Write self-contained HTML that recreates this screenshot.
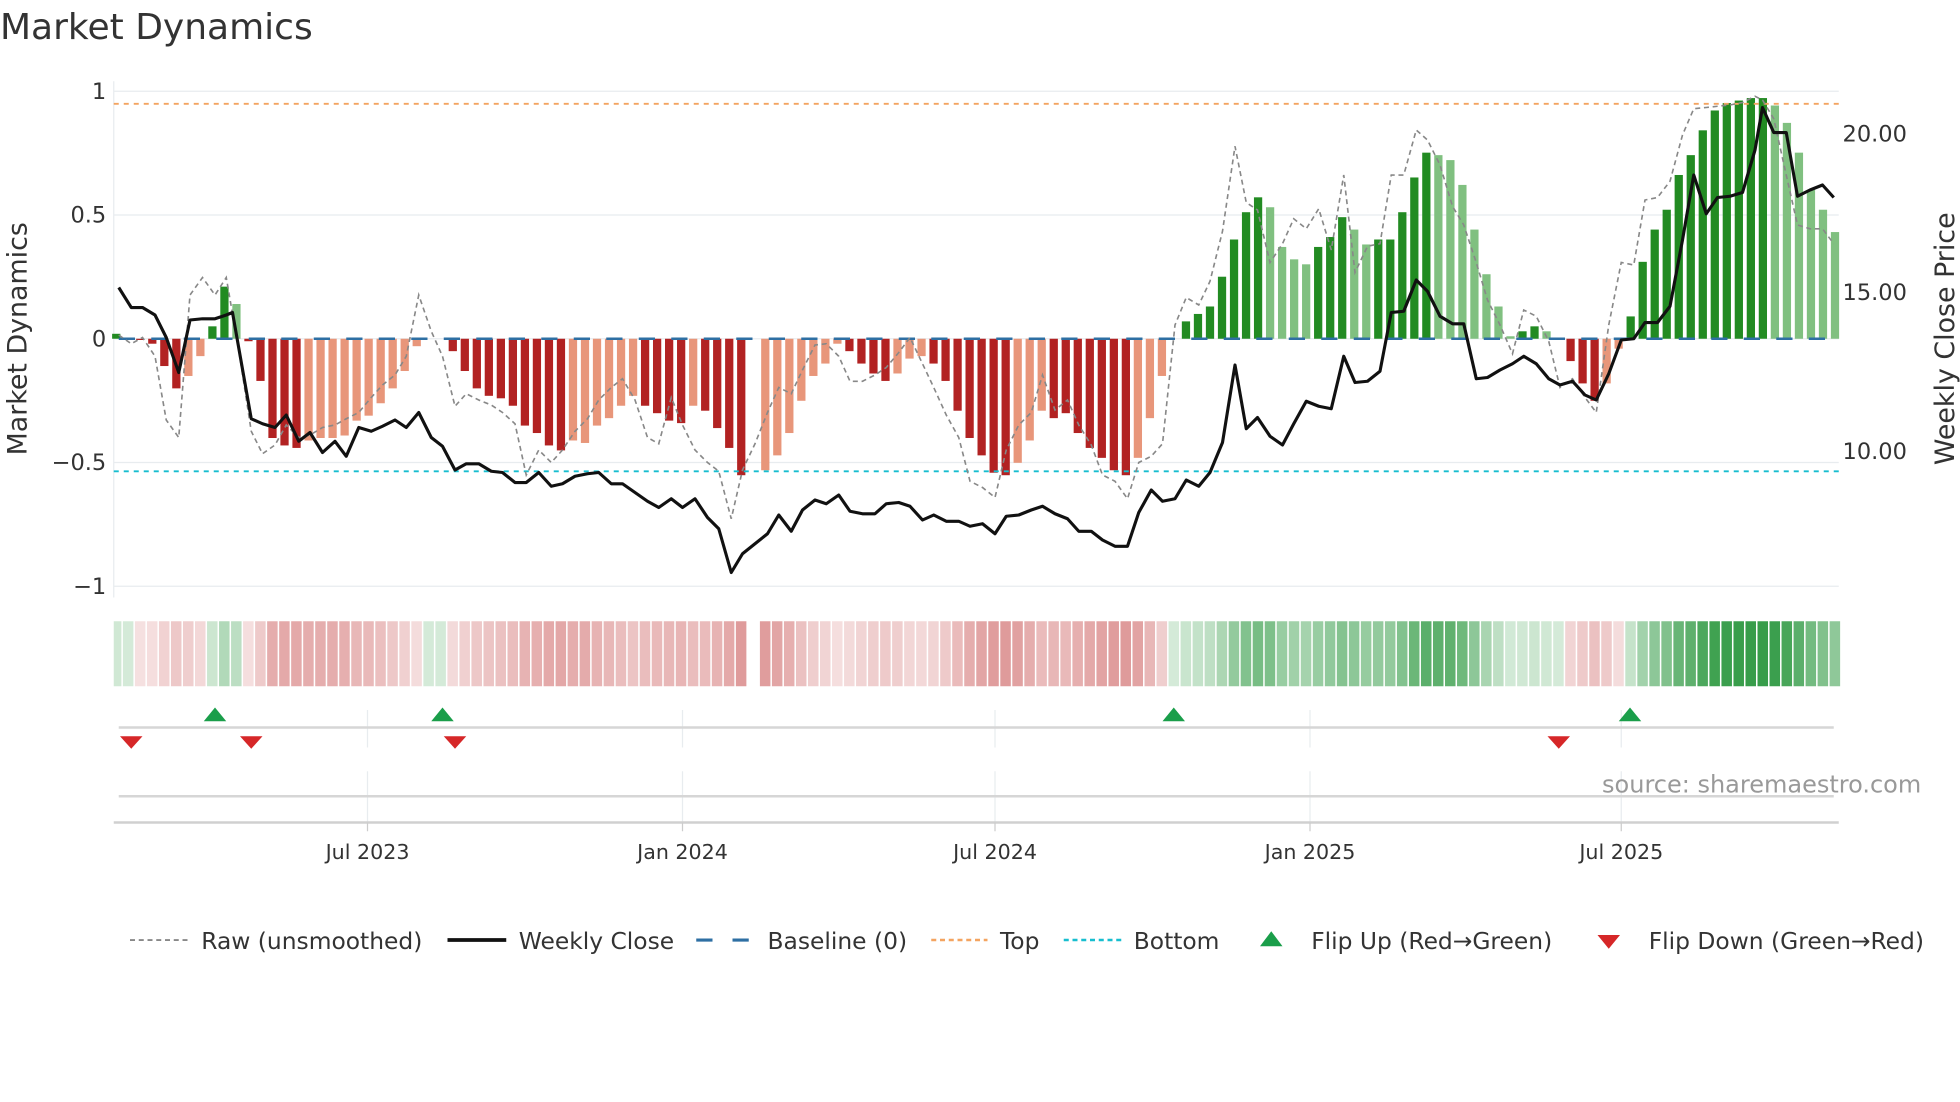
<!DOCTYPE html>
<html><head><meta charset="utf-8"><style>
html,body{margin:0;padding:0;background:#fff;width:1960px;height:1102px;overflow:hidden}
svg{display:block}
text{font-family:"DejaVu Sans","Liberation Sans",sans-serif;fill:#333}
</style></head><body>
<svg id="s" width="1960" height="1102" viewBox="0 0 1568 881.6" preserveAspectRatio="none" xmlns="http://www.w3.org/2000/svg">
<text x="0" y="31" font-size="28.8">Market Dynamics</text>
<g stroke="#e8ecef" stroke-width="1">
<line x1="91" y1="73" x2="1471" y2="73"/><line x1="91" y1="172" x2="1471" y2="172"/>
<line x1="91" y1="271" x2="1471" y2="271"/><line x1="91" y1="370" x2="1471" y2="370"/>
<line x1="91" y1="469" x2="1471" y2="469"/>
<line x1="91" y1="65" x2="91" y2="478"/>
<line x1="294" y1="568" x2="294" y2="598"/><line x1="546" y1="568" x2="546" y2="598"/><line x1="796" y1="568" x2="796" y2="598"/><line x1="1048" y1="568" x2="1048" y2="598"/><line x1="1297" y1="568" x2="1297" y2="598"/>
<line x1="294" y1="617" x2="294" y2="658"/><line x1="546" y1="617" x2="546" y2="658"/><line x1="796" y1="617" x2="796" y2="658"/><line x1="1048" y1="617" x2="1048" y2="658"/><line x1="1297" y1="617" x2="1297" y2="658"/>
</g>
<g id="bars"></g>
<g id="strip"></g>
<line x1="91" y1="83" x2="1471" y2="83" stroke="#f4a460" stroke-width="1.5" stroke-dasharray="4,4"/>
<line x1="91" y1="377" x2="1471" y2="377" stroke="#17becf" stroke-width="1.5" stroke-dasharray="4,4"/>
<line x1="95" y1="271" x2="1467" y2="271" stroke="#2e6fa3" stroke-width="2" stroke-dasharray="13,13"/>
<polyline id="raw" fill="none" stroke="#888" stroke-width="1.3" stroke-dasharray="4,3"/>
<polyline id="close" fill="none" stroke="#111" stroke-width="2.5" stroke-linejoin="round"/>
<g font-size="18" text-anchor="end">
<text x="85" y="79">1</text><text x="85" y="178">0.5</text><text x="85" y="277">0</text><text x="85" y="376">−0.5</text><text x="85" y="475">−1</text>
</g>
<g font-size="18">
<text x="1474" y="113">20.00</text><text x="1474" y="240">15.00</text><text x="1474" y="367">10.00</text>
</g>
<text transform="translate(21,271) rotate(-90)" font-size="21.5" text-anchor="middle">Market Dynamics</text>
<text transform="translate(1563,271) rotate(-90)" font-size="21.5" text-anchor="middle">Weekly Close Price</text>
<line x1="95" y1="582" x2="1467" y2="582" stroke="#d6d6d6" stroke-width="2"/>
<line x1="95" y1="637" x2="1467" y2="637" stroke="#d6d6d6" stroke-width="2"/>
<line x1="91" y1="658" x2="1471" y2="658" stroke="#d0d0d0" stroke-width="2"/>
<g stroke="#ccc" stroke-width="1"><line x1="294" y1="658" x2="294" y2="665"/><line x1="546" y1="658" x2="546" y2="665"/><line x1="796" y1="658" x2="796" y2="665"/><line x1="1048" y1="658" x2="1048" y2="665"/><line x1="1297" y1="658" x2="1297" y2="665"/></g>
<g fill="#1a9e4a">
<polygon points="163,577 181,577 172,566"/><polygon points="345,577 363,577 354,566"/><polygon points="930,577 948,577 939,566"/><polygon points="1295,577 1313,577 1304,566"/>
<polygon points="1008,757 1026,757 1017,745"/>
</g>
<g fill="#d62728">
<polygon points="96,589 114,589 105,599"/><polygon points="192,589 210,589 201,599"/><polygon points="355,589 373,589 364,599"/><polygon points="1238,589 1256,589 1247,599"/>
<polygon points="1278,748 1296,748 1287,759"/>
</g>
<text x="1537" y="634" font-size="19.2" text-anchor="end" style="fill:#999">source: sharemaestro.com</text>
<g font-size="16.5" text-anchor="middle">
<text x="294" y="687">Jul 2023</text><text x="546" y="687">Jan 2024</text><text x="796" y="687">Jul 2024</text><text x="1048" y="687">Jan 2025</text><text x="1297" y="687">Jul 2025</text>
</g>
<g font-size="18.7">
<line x1="104" y1="752" x2="150" y2="752" stroke="#888" stroke-width="1.5" stroke-dasharray="4,3"/><text x="161" y="759">Raw (unsmoothed)</text>
<line x1="358" y1="752" x2="405" y2="752" stroke="#111" stroke-width="3"/><text x="415" y="759">Weekly Close</text>
<line x1="557" y1="752" x2="603" y2="752" stroke="#2e6fa3" stroke-width="2.5" stroke-dasharray="13,16"/><text x="614" y="759">Baseline (0)</text>
<line x1="745" y1="752" x2="790" y2="752" stroke="#f4a460" stroke-width="2" stroke-dasharray="4,3"/><text x="800" y="759">Top</text>
<line x1="851" y1="752" x2="897" y2="752" stroke="#17becf" stroke-width="2" stroke-dasharray="4,3"/><text x="907" y="759">Bottom</text>
<text x="1049" y="759">Flip Up (Red→Green)</text>
<text x="1319" y="759">Flip Down (Green→Red)</text>
</g>
</svg>
<script>
var V=[[.02,'D'],[0,'D'],[-.005,'D'],[-.02,'D'],[-.11,'D'],[-.2,'D'],[-.15,'L'],[-.07,'L'],[.05,'D'],[.21,'D'],[.14,'L'],[-.01,'D'],[-.17,'D'],[-.4,'D'],[-.43,'D'],[-.44,'D'],[-.41,'L'],[-.4,'L'],[-.4,'L'],[-.39,'L'],[-.33,'L'],[-.31,'L'],[-.26,'L'],[-.2,'L'],[-.13,'L'],[-.03,'L'],[0,'N'],[0,'N'],[-.05,'D'],[-.13,'D'],[-.2,'D'],[-.23,'D'],[-.24,'D'],[-.27,'D'],[-.35,'D'],[-.38,'D'],[-.43,'D'],[-.45,'D'],[-.41,'L'],[-.42,'L'],[-.35,'L'],[-.32,'L'],[-.27,'L'],[-.23,'L'],[-.27,'D'],[-.3,'D'],[-.33,'D'],[-.34,'D'],[-.27,'L'],[-.29,'D'],[-.36,'D'],[-.44,'D'],[-.55,'D'],[null,'G'],[-.53,'L'],[-.47,'L'],[-.38,'L'],[-.25,'L'],[-.15,'L'],[-.1,'L'],[-.02,'L'],[-.05,'D'],[-.1,'D'],[-.14,'D'],[-.17,'D'],[-.14,'L'],[-.08,'L'],[-.07,'L'],[-.1,'D'],[-.17,'D'],[-.29,'D'],[-.4,'D'],[-.47,'D'],[-.54,'D'],[-.55,'D'],[-.5,'L'],[-.41,'L'],[-.29,'L'],[-.32,'D'],[-.3,'D'],[-.38,'D'],[-.44,'D'],[-.48,'D'],[-.53,'D'],[-.55,'D'],[-.48,'L'],[-.32,'L'],[-.15,'L'],[0,'N'],
[.07,'D'],[.1,'D'],[.13,'D'],[.25,'D'],[.4,'D'],[.51,'D'],[.57,'D'],[.53,'L'],[.37,'L'],[.32,'L'],[.3,'L'],[.37,'D'],[.41,'D'],[.49,'D'],[.44,'L'],[.38,'L'],[.4,'D'],[.4,'D'],[.51,'D'],[.65,'D'],[.75,'D'],[.74,'L'],[.72,'L'],[.62,'L'],[.44,'L'],[.26,'L'],[.13,'L'],[.01,'L'],[.03,'D'],[.05,'D'],[.03,'L'],[0,'N'],[-.09,'D'],[-.18,'D'],[-.25,'D'],[-.18,'L'],[-.04,'L'],[.09,'D'],[.31,'D'],[.44,'D'],[.52,'D'],[.66,'D'],[.74,'D'],[.84,'D'],[.92,'D'],[.95,'D'],[.96,'D'],[.97,'D'],[.97,'D'],[.94,'L'],[.87,'L'],[.75,'L'],[.6,'L'],[.52,'L'],[.43,'L']];
var NS='http://www.w3.org/2000/svg',bars=document.getElementById('bars'),strip=document.getElementById('strip');
var n=V.length,step=(1468-93)/(n-1);
function R(g,x,y,w,h,f){var r=document.createElementNS(NS,'rect');r.setAttribute('x',x);r.setAttribute('y',y);r.setAttribute('width',w);r.setAttribute('height',h);r.setAttribute('fill',f);g.appendChild(r);}
V.forEach(function(e,i){var v=e[0],t=e[1],x=93+i*step;if(v===null)return;
 var h=Math.abs(v)*198.5;
 if(h>0.3){var c=v>0?(t=='D'?'#228b22':'#80c080'):(t=='D'?'#b22222':'#e8967a');R(bars,x-3.3,v>0?271-h:271,6.6,h,c);}
 var a=Math.abs(v);var col=v>=0?'rgba(40,150,60,'+(0.2+0.75*a).toFixed(2)+')':'rgba(190,50,50,'+(0.15+0.62*a).toFixed(2)+')';
 var sx=Math.max(91,x-4.3);R(strip,sx,497,x+4.1-sx,52,col);});
var C=[[95,230],[105,246],[114,246],[124,252],[133,270],[143,298],[152,256],[162,255],[172,255],[181,252],[186,250],[201,335],[210,339],[220,342],[229,332],[239,353],[248,346],[258,362],[268,353],[277,365],[287,342],[297,345],[306,341],[316,336],[325,342],[335,330],[345,350],[354,357],[364,376],[373,371],[383,371],[393,377],[402,378],[412,386],[421,386],[431,378],[441,389],[450,387],[460,381],[470,379],[479,378],[489,387],[498,387],[508,394],[518,401],[527,406],[537,399],[546,406],[556,399],[566,414],[575,423],[585,458],[594,443],[604,435],[614,427],[623,412],[633,425],[642,408],[652,400],[661,403],[671,396],[680,409],[690,411],[700,411],[709,403],[719,402],[728,405],[738,416],[747,412],[757,417],[767,417],[776,421],[786,419],[796,427],[805,413],[815,412],[825,408],[834,405],[844,411],[854,415],[863,425],[873,425],[882,432],[892,437],[902,437],[911,410],[921,392],[930,401],[940,399],[949,384],[959,389],[968,378],[978,354],[988,292],[997,343],[1006,334],[1016,349],[1026,356],[1035,339],[1045,321],[1055,325],[1065,327],[1075,285],[1084,306],[1094,305],[1104,297],[1113,250],[1123,249],[1133,224],[1142,233],[1152,253],[1162,259],[1171,259],[1181,303],[1190,302],[1200,296],[1210,291],[1219,285],[1229,291],[1239,303],[1248,308],[1258,305],[1268,316],[1277,320],[1287,299],[1297,272],[1307,271],[1316,258],[1326,258],[1336,245],[1346,192],[1355,140],[1365,171],[1374,158],[1384,157],[1394,154],[1404,120],[1410,86],[1419,106],[1429,106],[1438,157],[1448,152],[1458,148],[1467,158]];
var W=[[95,268],[105,275],[114,270],[124,285],[133,336],[143,350],[152,236],[162,222],[172,236],[181,222],[191,280],[201,345],[210,363],[220,356],[229,340],[239,350],[248,348],[258,342],[268,340],[277,335],[287,330],[297,318],[306,308],[316,300],[325,285],[335,236],[345,265],[354,285],[364,325],[373,315],[383,320],[393,324],[402,330],[412,339],[421,380],[431,360],[441,370],[450,360],[460,345],[470,335],[479,320],[489,310],[498,303],[508,320],[518,350],[527,355],[537,318],[546,340],[556,360],[566,370],[575,377],[585,415],[594,376],[604,355],[614,330],[623,310],[633,315],[642,296],[652,276],[661,275],[671,285],[680,305],[690,305],[700,300],[709,294],[719,282],[728,270],[738,291],[747,310],[757,332],[767,350],[776,385],[786,390],[796,398],[805,360],[815,340],[825,330],[834,300],[844,328],[854,320],[863,340],[873,356],[882,380],[892,385],[902,399],[911,370],[921,365],[930,355],[940,260],[949,238],[959,244],[968,225],[978,185],[988,117],[997,162],[1006,168],[1016,210],[1026,195],[1035,175],[1045,183],[1055,167],[1065,200],[1075,140],[1084,218],[1094,197],[1104,195],[1113,140],[1123,140],[1133,104],[1142,112],[1152,132],[1162,165],[1171,180],[1181,210],[1190,240],[1200,260],[1210,283],[1219,248],[1229,253],[1239,273],[1248,310],[1258,303],[1268,318],[1277,330],[1287,260],[1297,210],[1307,212],[1316,160],[1326,158],[1336,145],[1346,108],[1355,87],[1365,86],[1374,85],[1384,84],[1394,82],[1404,77],[1410,80],[1419,95],[1429,140],[1438,180],[1448,183],[1458,183],[1467,195]];
document.getElementById('close').setAttribute('points',C.map(function(p){return p.join(',')}).join(' '));
document.getElementById('raw').setAttribute('points',W.map(function(p){return p.join(',')}).join(' '));
</script>
</body></html>
